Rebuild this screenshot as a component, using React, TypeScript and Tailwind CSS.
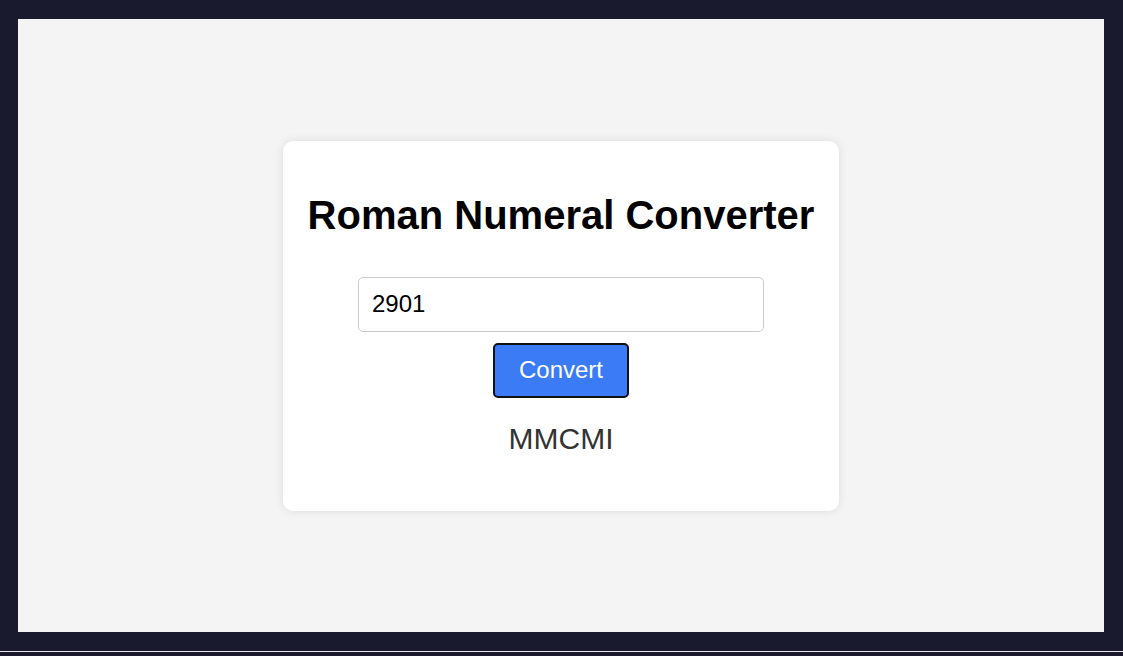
import React, { useState } from "react";

function toRoman(n: number): string {
  const map: [number, string][] = [
    [1000, "M"], [900, "CM"], [500, "D"], [400, "CD"], [100, "C"], [90, "XC"],
    [50, "L"], [40, "XL"], [10, "X"], [9, "IX"], [5, "V"], [4, "IV"], [1, "I"],
  ];
  let out = "";
  for (const [v, s] of map) {
    while (n >= v) {
      out += s;
      n -= v;
    }
  }
  return out;
}

export default function App() {
  const [value, setValue] = useState("2901");
  const [result, setResult] = useState("MMCMI");
  return (
    <div className="w-[1123px] h-[656px] bg-[#1a1a2e] flex flex-col overflow-hidden" style={{ fontFamily: "'Liberation Sans', Arial, sans-serif" }}>
      <div className="ml-[18px] mr-[19px] mt-[19px] h-[613px] bg-[#f4f4f4] flex items-center justify-center">
        <div className="bg-white rounded-[10px] shadow-[0_0_10px_rgba(0,0,0,0.1)] px-[25px] pt-[24px] pb-[24px] flex flex-col items-center">
          <h1 className="text-[40px] font-bold text-black leading-[46px] mt-[27px] mb-[39px]">Roman Numeral Converter</h1>
          <input
            value={value}
            onChange={(e) => setValue(e.target.value)}
            className="w-[406px] h-[55px] border border-[#ccc] rounded-[5px] px-[13px] text-[24px] text-black outline-none"
          />
          <button
            onClick={() => setResult(toRoman(parseInt(value, 10) || 0))}
            className="mt-[11px] w-[136px] h-[55px] bg-[#3b7bf6] border-2 border-[#111] rounded-[5px] text-white text-[24px]"
          >
            Convert
          </button>
          <div className="mt-[24px] mb-[31px] text-[30px] text-[#333] leading-[34px]">{result}</div>
        </div>
      </div>
      <div className="mt-[19px] h-px bg-[#e6e6e6]" />
    </div>
  );
}
